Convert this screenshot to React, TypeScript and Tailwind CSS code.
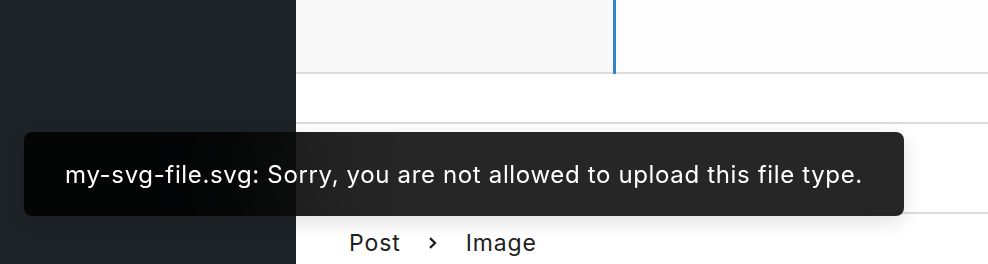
export default function App() {
  return (
    <div className="relative flex h-[264px] w-[988px] overflow-hidden bg-white font-['Inter',sans-serif]">
      <aside className="w-[296px] shrink-0 bg-[#1e2327]" />

      <main className="flex flex-1 flex-col">
        <div className="flex h-[74px] border-b-2 border-[#dcdcdc]">
          <div className="w-[317px] bg-[#f8f8f8]" />
          <div className="-mb-[2px] w-[3px] bg-[#3582c4]" />
          <div className="flex-1 bg-[#fdfdfd]" />
        </div>
        <div className="h-[50px] border-b-2 border-[#dcdcdc]" />
        <div className="h-[90px] border-b-2 border-[#dcdcdc]" />
        <nav className="flex items-center pl-[53px] pt-[12px] text-[23px] tracking-[0.9px] text-[#1e1e1e]">
          <span>Post</span>
          <svg className="ml-[27px] mr-[28px] h-[12px] w-[10px]" viewBox="0 0 10 12" fill="none">
            <polyline points="2,1.2 7,6 2,10.8" stroke="#1e1e1e" strokeWidth="2.3" />
          </svg>
          <span>Image</span>
        </nav>
      </main>

      <div className="absolute left-[24px] top-[132px] flex h-[84px] w-[880px] items-center justify-center rounded-lg bg-black/85 pt-[2px] text-[24px] tracking-[0.65px] text-white shadow-[0_6px_20px_rgba(0,0,0,0.12)] backdrop-blur-3xl">
        my-svg-file.svg: Sorry, you are not allowed to upload this file type.
      </div>
    </div>
  );
}
